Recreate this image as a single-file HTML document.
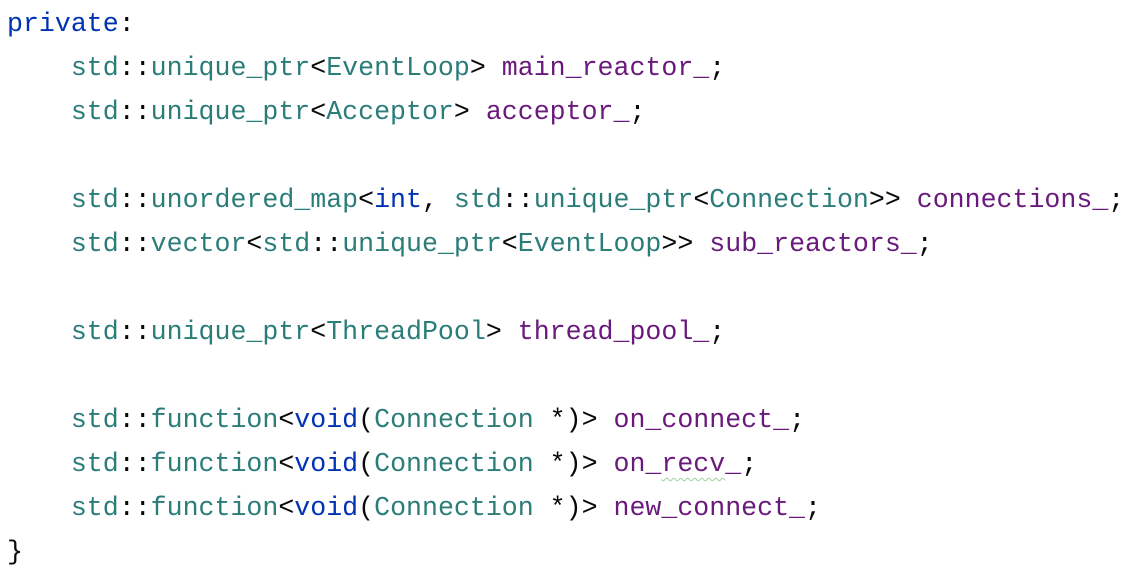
<!DOCTYPE html>
<html><head><meta charset="utf-8"><style>
html,body{margin:0;padding:0;background:#fff;width:1136px;height:540px;overflow:hidden}
pre{margin:0;position:absolute;left:7px;top:2px;font-family:"Liberation Mono",monospace;font-size:26.6px;line-height:44px;color:#080808;white-space:pre}
.k{color:#0033b3}.t{color:#2b7d7a}.m{color:#6a1a7c}
.w{text-decoration:underline wavy #9fcf9f;text-decoration-thickness:1px;text-underline-offset:6px}
</style></head><body><pre><span class="k">private</span>:
    <span class="t">std</span>::<span class="t">unique_ptr</span>&lt;<span class="t">EventLoop</span>&gt; <span class="m">main_reactor_</span>;
    <span class="t">std</span>::<span class="t">unique_ptr</span>&lt;<span class="t">Acceptor</span>&gt; <span class="m">acceptor_</span>;

    <span class="t">std</span>::<span class="t">unordered_map</span>&lt;<span class="k">int</span>, <span class="t">std</span>::<span class="t">unique_ptr</span>&lt;<span class="t">Connection</span>&gt;&gt; <span class="m">connections_</span>;
    <span class="t">std</span>::<span class="t">vector</span>&lt;<span class="t">std</span>::<span class="t">unique_ptr</span>&lt;<span class="t">EventLoop</span>&gt;&gt; <span class="m">sub_reactors_</span>;

    <span class="t">std</span>::<span class="t">unique_ptr</span>&lt;<span class="t">ThreadPool</span>&gt; <span class="m">thread_pool_</span>;

    <span class="t">std</span>::<span class="t">function</span>&lt;<span class="k">void</span>(<span class="t">Connection</span> *)&gt; <span class="m">on_connect_</span>;
    <span class="t">std</span>::<span class="t">function</span>&lt;<span class="k">void</span>(<span class="t">Connection</span> *)&gt; <span class="m">on_<span class="w">recv</span>_</span>;
    <span class="t">std</span>::<span class="t">function</span>&lt;<span class="k">void</span>(<span class="t">Connection</span> *)&gt; <span class="m">new_connect_</span>;
}</pre></body></html>
